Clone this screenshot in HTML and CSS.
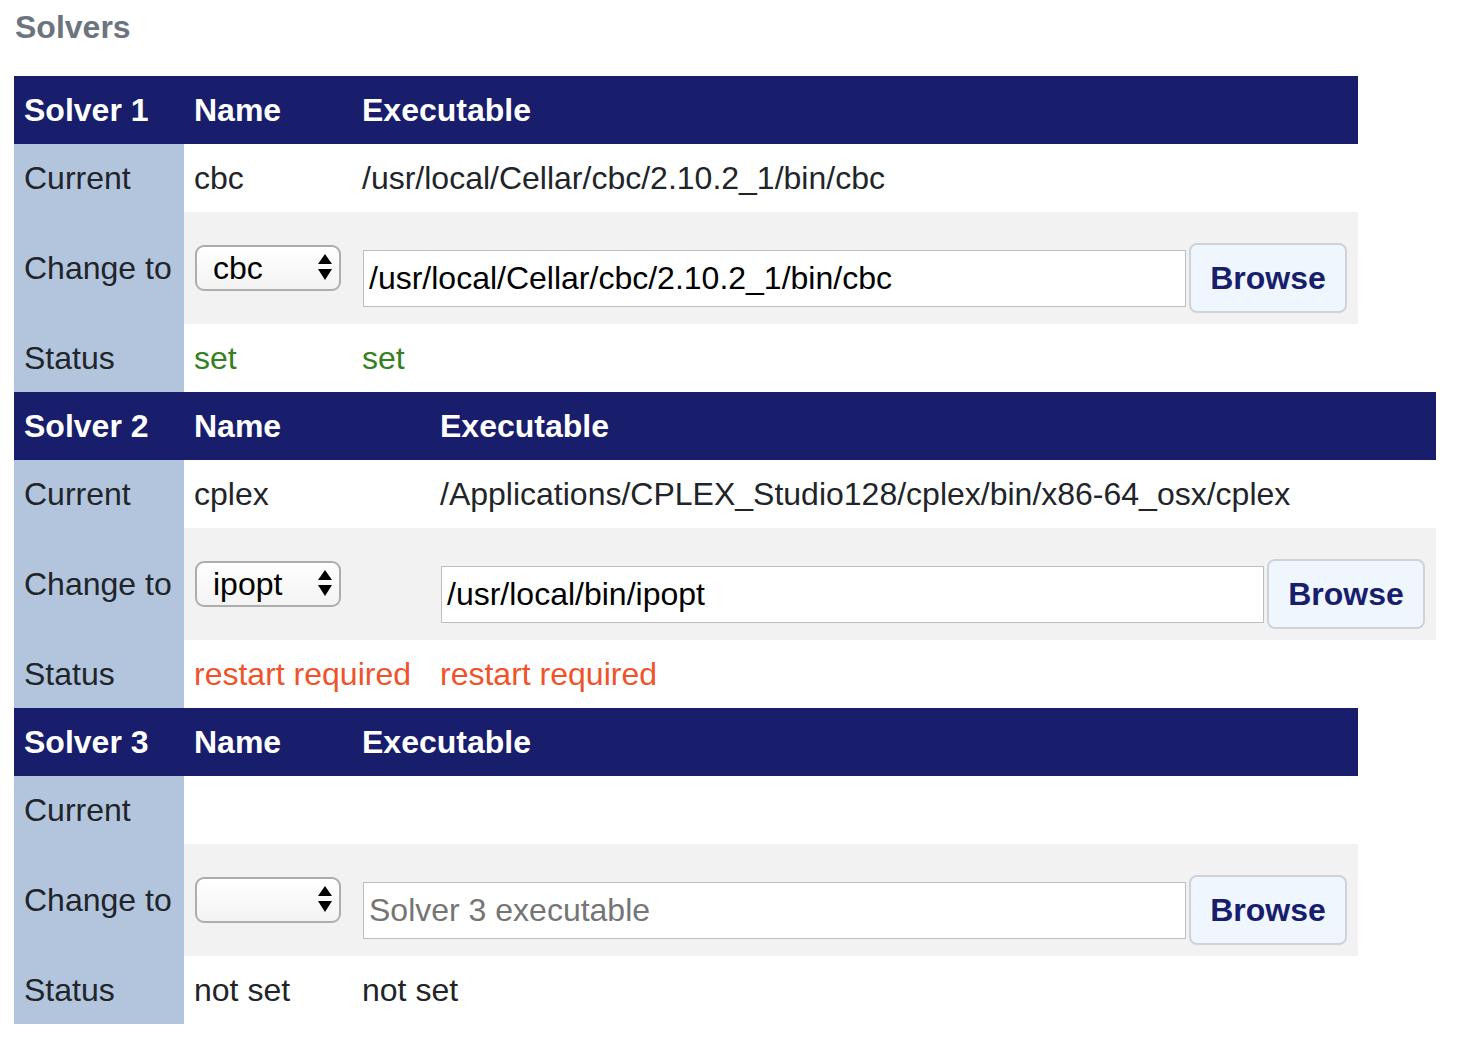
FILE: index.html
```html
<!DOCTYPE html>
<html lang="en">
<head>
<meta charset="utf-8">
<title>Solvers</title>
<link rel="stylesheet" href="styles.css">
</head>
<body>
<h1 class="title">Solvers</h1>

<table class="solver">
  <colgroup><col class="c1"><col class="c2"><col class="c3"></colgroup>
  <thead><tr><th>Solver 1</th><th>Name</th><th>Executable</th></tr></thead>
  <tbody>
    <tr><td class="lbl">Current</td><td>cbc</td><td>/usr/local/Cellar/cbc/2.10.2_1/bin/cbc</td></tr>
    <tr class="change">
      <td class="lbl">Change to</td>
      <td class="selcell"><div class="sel"><select><option>cbc</option></select><svg class="arrows" width="14" height="26" viewBox="0 0 14 26"><path d="M7 0 L14 10 L0 10 Z M0 15 L14 15 L7 26 Z" fill="#000"/></svg></div></td>
      <td class="exe"><div class="exe-row"><input type="text" value="/usr/local/Cellar/cbc/2.10.2_1/bin/cbc"><button>Browse</button></div></td>
    </tr>
    <tr><td class="lbl">Status</td><td class="ok">set</td><td class="ok">set</td></tr>
  </tbody>
</table>

<table class="solver wide">
  <colgroup><col class="c1"><col class="c2w"><col class="c3"></colgroup>
  <thead><tr><th>Solver 2</th><th>Name</th><th>Executable</th></tr></thead>
  <tbody>
    <tr><td class="lbl">Current</td><td>cplex</td><td>/Applications/CPLEX_Studio128/cplex/bin/x86-64_osx/cplex</td></tr>
    <tr class="change">
      <td class="lbl">Change to</td>
      <td class="selcell"><div class="sel"><select><option>ipopt</option></select><svg class="arrows" width="14" height="26" viewBox="0 0 14 26"><path d="M7 0 L14 10 L0 10 Z M0 15 L14 15 L7 26 Z" fill="#000"/></svg></div></td>
      <td class="exe"><div class="exe-row"><input type="text" value="/usr/local/bin/ipopt"><button>Browse</button></div></td>
    </tr>
    <tr><td class="lbl">Status</td><td class="warn">restart required</td><td class="warn">restart required</td></tr>
  </tbody>
</table>

<table class="solver">
  <colgroup><col class="c1"><col class="c2"><col class="c3"></colgroup>
  <thead><tr><th>Solver 3</th><th>Name</th><th>Executable</th></tr></thead>
  <tbody>
    <tr><td class="lbl">Current</td><td></td><td></td></tr>
    <tr class="change">
      <td class="lbl">Change to</td>
      <td class="selcell"><div class="sel"><select><option></option></select><svg class="arrows" width="14" height="26" viewBox="0 0 14 26"><path d="M7 0 L14 10 L0 10 Z M0 15 L14 15 L7 26 Z" fill="#000"/></svg></div></td>
      <td class="exe"><div class="exe-row"><input type="text" placeholder="Solver 3 executable"><button>Browse</button></div></td>
    </tr>
    <tr><td class="lbl">Status</td><td>not set</td><td>not set</td></tr>
  </tbody>
</table>
</body>
</html>
```

FILE: styles.css
```css
html, body {
  margin: 0;
  padding: 0;
  background: #fff;
}
body {
  padding: 0 14px;
  font-family: "Liberation Sans", Arial, Helvetica, sans-serif;
  font-size: 32px;
  color: #212529;
}
.title {
  margin: 7px 0 29px 1px;
  font-size: 32px;
  line-height: 40px;
  font-weight: bold;
  color: #6c757d;
}
.solver {
  border-collapse: collapse;
  border-spacing: 0;
  table-layout: fixed;
  width: 1344px;
}
.solver.wide {
  width: 1422px;
}
.c1 { width: 170px; }
.c2 { width: 168px; }
.c2w { width: 246px; }
.c3 { width: 1006px; }
.solver th,
.solver td {
  padding: 10px;
  line-height: 48px;
  text-align: left;
  vertical-align: middle;
  white-space: nowrap;
}
.solver th {
  background: #181d6c;
  color: #fff;
  font-weight: bold;
}
.solver td.lbl {
  background: #b3c4dd;
}
.solver .change td {
  background: #f2f2f2;
}
.solver .change td.lbl {
  background: #b3c4dd;
}
.solver td.selcell {
  padding: 0 10px 0 11px;
}
.sel {
  position: relative;
  width: 146px;
  height: 46px;
  margin-top: -2px;
}
.sel select {
  -webkit-appearance: none;
  appearance: none;
  box-sizing: border-box;
  width: 146px;
  height: 46px;
  margin: 0;
  padding: 0 30px 0 16px;
  border: 2px solid #adadad;
  border-radius: 9px;
  background: linear-gradient(#ffffff, #f3f3f3);
  font-family: "Liberation Sans", Arial, Helvetica, sans-serif;
  font-size: 32px;
  color: #000;
}
.arrows {
  position: absolute;
  right: 9px;
  top: 10px;
  pointer-events: none;
}
.solver td.exe {
  padding: 31px 11px 11px 11px;
}
.exe-row {
  display: flex;
  align-items: center;
  gap: 3px;
}
.exe-row input {
  box-sizing: border-box;
  width: 823px;
  height: 57px;
  margin: 0;
  padding: 0 5px;
  border: 1px solid #bdbdbd;
  background: #fff;
  font-family: "Liberation Sans", Arial, Helvetica, sans-serif;
  font-size: 32px;
  color: #000;
}
.exe-row input::placeholder {
  color: #757575;
}
.exe-row button {
  box-sizing: border-box;
  width: 158px;
  height: 70px;
  margin: 0;
  padding: 0;
  border: 2px solid #cfd3d8;
  border-radius: 8px;
  background: #eff6fe;
  font-family: "Liberation Sans", Arial, Helvetica, sans-serif;
  font-size: 32px;
  font-weight: bold;
  color: #181d6c;
}
.ok { color: #35801f; }
.warn { color: #f05329; }
```
